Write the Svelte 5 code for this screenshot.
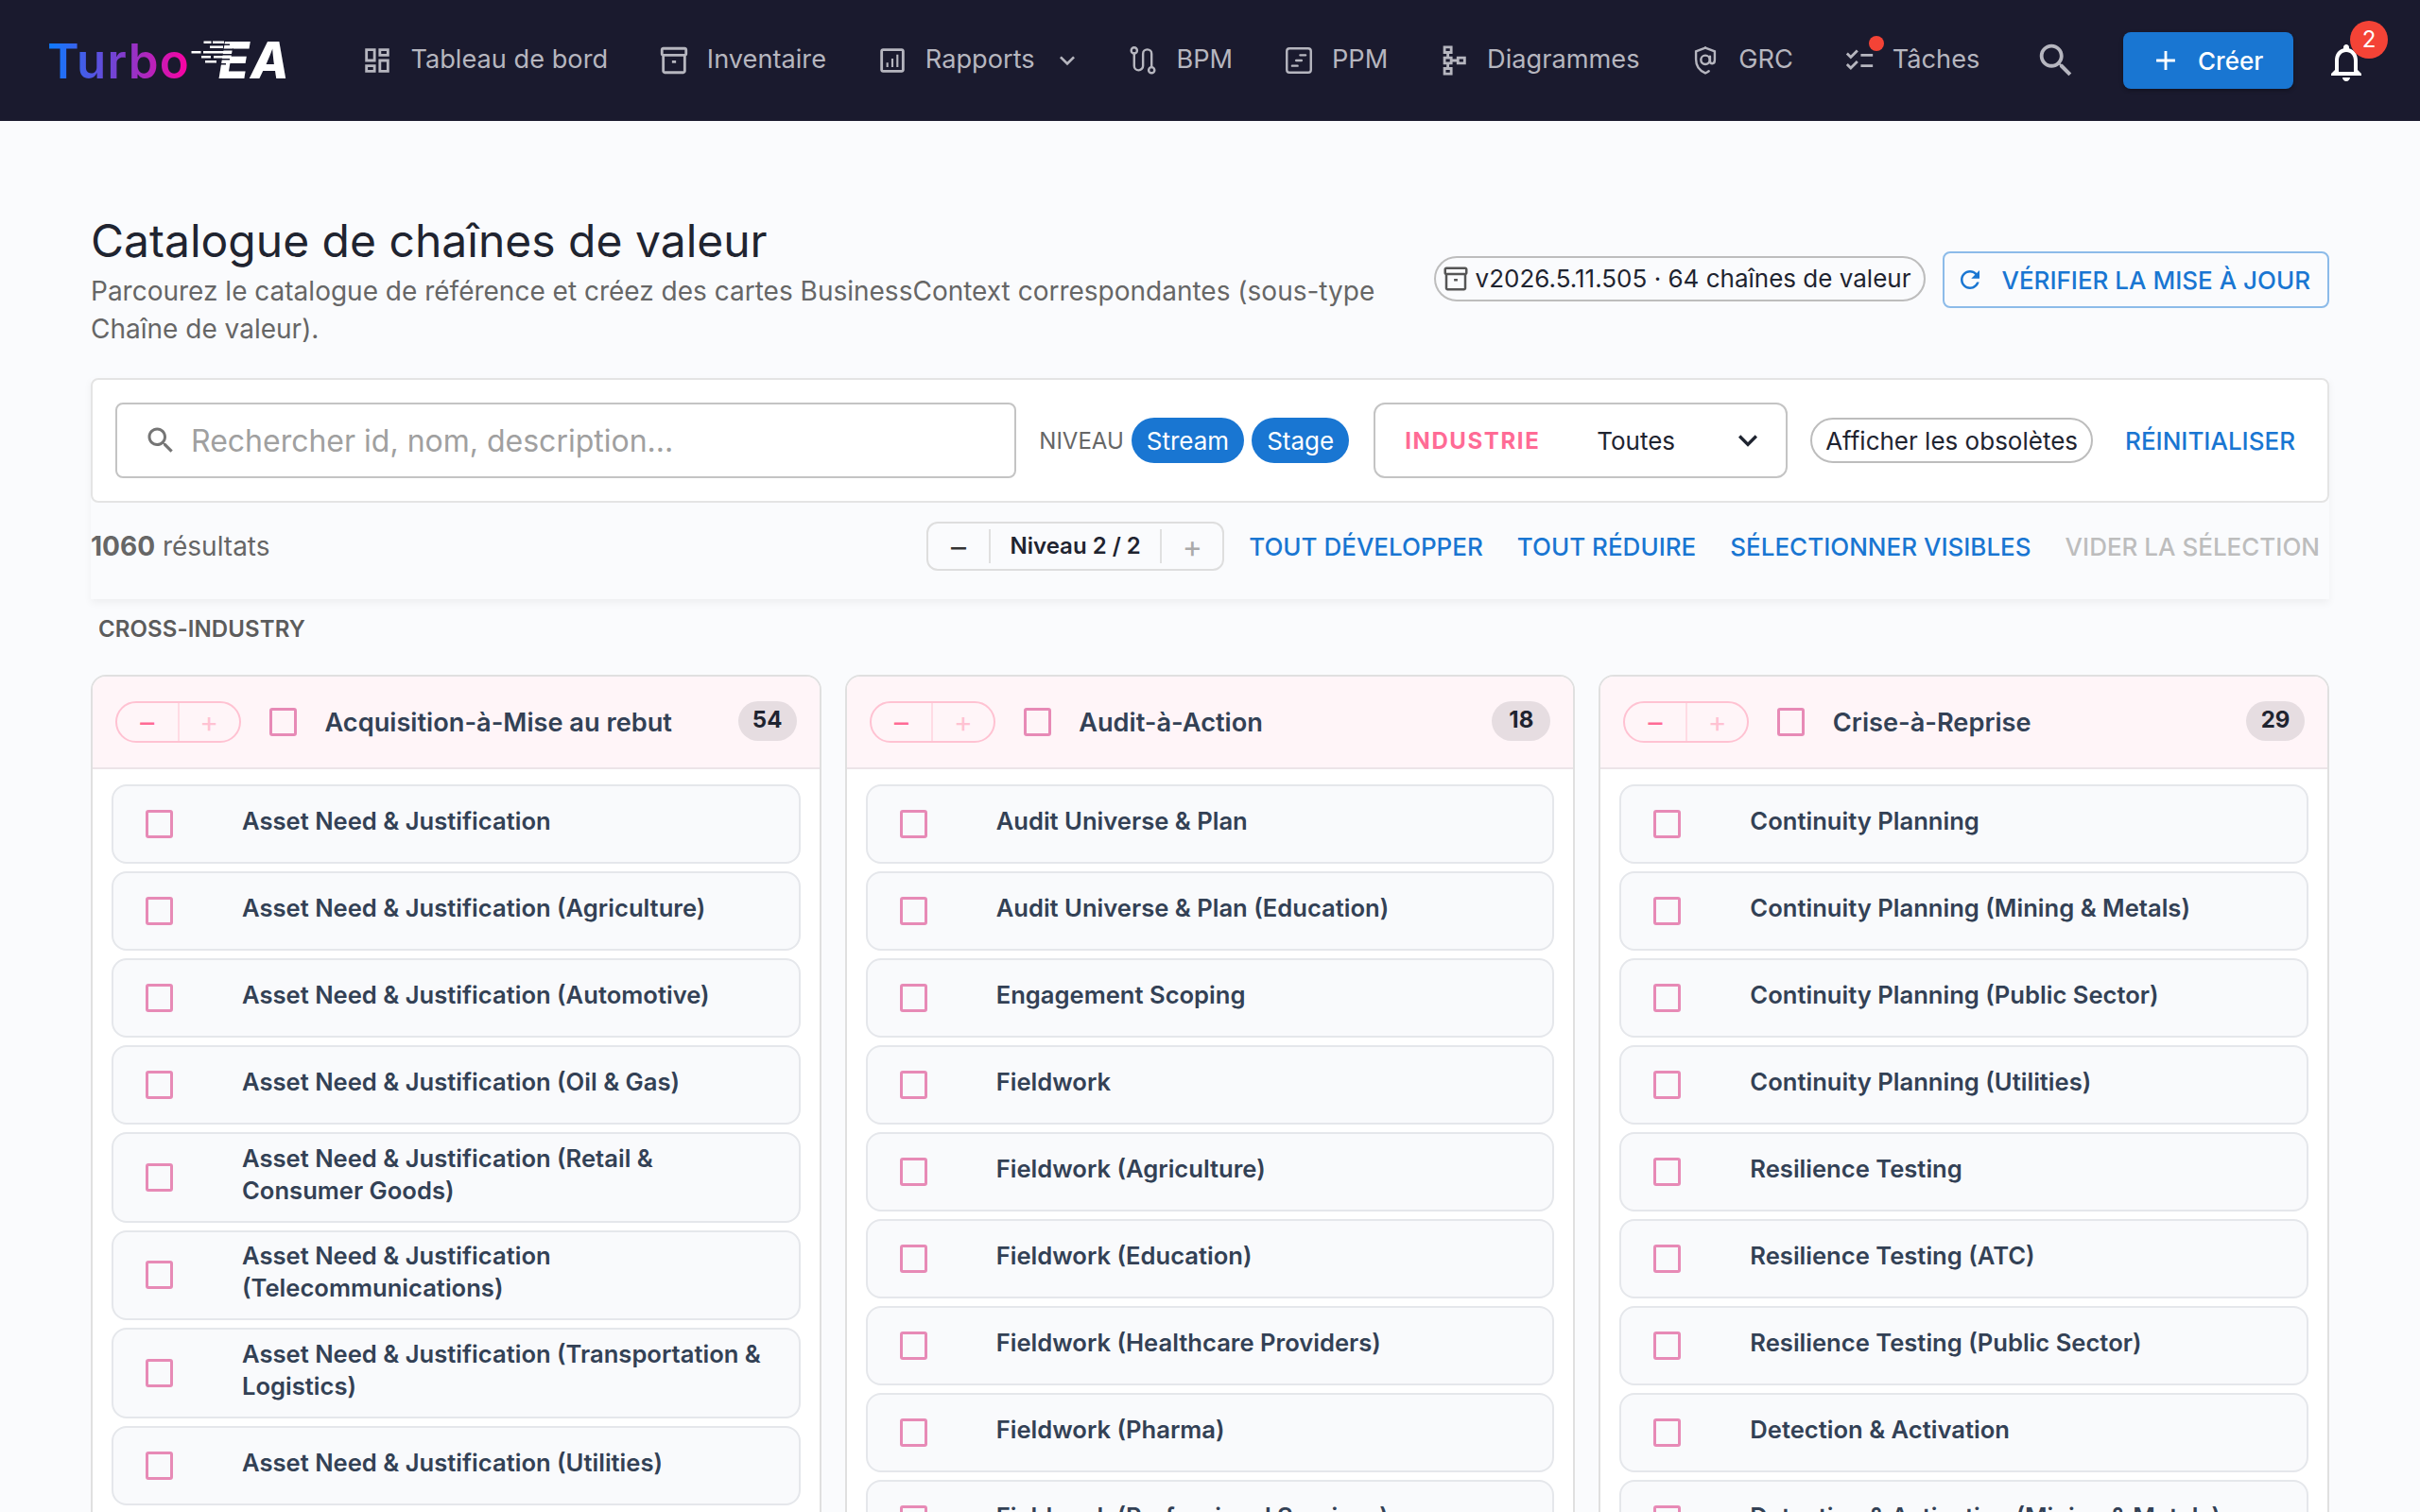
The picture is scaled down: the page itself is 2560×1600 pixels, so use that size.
<script>
	const icons = {
		dashboard: 'M19 5v2h-4V5h4M9 5v6H5V5h4m10 8v6h-4v-6h4M9 17v2H5v-2h4M21 3h-8v6h8V3zM11 3H3v10h8V3zm10 8h-8v10h8V11zm-10 4H3v6h8v-6z',
		archive: 'M20 2H4c-1 0-2 .9-2 2v3.01c0 .72.43 1.34 1 1.69V20c0 1.1 1.1 2 2 2h14c.9 0 2-.9 2-2V8.7c.57-.35 1-.97 1-1.69V4c0-1.1-1-2-2-2zm-1 18H5V9h14v11zm1-13H4V4h16v3zM10.5 12h3v2h-3z',
		report: 'M19 3H5c-1.1 0-2 .9-2 2v14c0 1.1.9 2 2 2h14c1.100 0 2-.9 2-2V5c0-1.100-.9-2-2-2zm0 16H5V5h14v14zM7.500 13.500h1.500V17H7.500zm3.750-3h1.500V17h-1.500zm3.750-3h1.500V17H15z',
		schema: 'M14 9v2h-3V9H8.500V7H11V1H4v6h2.500v2H4v6h2.500v2H4v6h7v-6H8.500v-2H11v-2h3v2h7V9h-7zM9 3v2H6V3h3zM9 19v2H6v-2h3zM9 11v2H6v-2h3zM19 11v2h-3v-2h3z',
		checklist: 'M22 7h-9v2h9V7zm0 8h-9v2h9v-2zM5.540 11 2 7.460l1.410-1.410 2.120 2.120 4.240-4.240 1.410 1.410L5.540 11zm0 8L2 15.460l1.410-1.410 2.120 2.120 4.240-4.240 1.410 1.410L5.540 19z',
		search: 'M15.500 14h-.79l-.28-.27C15.410 12.590 16 11.110 16 9.500 16 5.910 13.090 3 9.500 3S3 5.910 3 9.500 5.910 16 9.500 16c1.610 0 3.090-.59 4.230-1.570l.27.28v.79l5 4.990L20.490 19l-4.990-5zm-6 0C7.010 14 5 11.990 5 9.500S7.010 5 9.500 5 14 7.010 14 9.500 11.990 14 9.500 14z',
		bell: 'M12 22c1.100 0 2-.9 2-2h-4c0 1.100.9 2 2 2zm6-6v-5c0-3.070-1.630-5.640-4.500-6.320V4c0-.83-.67-1.500-1.500-1.500s-1.500.67-1.500 1.500v.68C7.640 5.360 6 7.920 6 11v5l-2 2v1h16v-1l-2-2zm-2 1H8v-6c0-2.480 1.510-4.500 4-4.500s4 2.020 4 4.500v6z',
		refresh: 'M17.650 6.350C16.200 4.900 14.210 4 12 4c-4.420 0-7.990 3.580-7.990 8s3.570 8 7.990 8c3.730 0 6.840-2.550 7.730-6h-2.080c-.82 2.330-3.040 4-5.650 4-3.310 0-6-2.690-6-6s2.690-6 6-6c1.660 0 3.140.69 4.220 1.780L13 11h7V4l-2.350 2.350z',
		chevron: 'M7.410 8.590 12 13.170l4.590-4.580L18 10l-6 6-6-6 1.410-1.410z',
		plus: 'M19 13h-6v6h-2v-6H5v-2h6V5h2v6h6v2z',
	};

	const columns = [
		{
			title: 'Acquisition-à-Mise au rebut',
			count: 54,
			items: [
				'Asset Need & Justification',
				'Asset Need & Justification (Agriculture)',
				'Asset Need & Justification (Automotive)',
				'Asset Need & Justification (Oil & Gas)',
				'Asset Need & Justification (Retail & Consumer Goods)',
				'Asset Need & Justification (Telecommunications)',
				'Asset Need & Justification (Transportation & Logistics)',
				'Asset Need & Justification (Utilities)',
			],
		},
		{
			title: 'Audit-à-Action',
			count: 18,
			items: [
				'Audit Universe & Plan',
				'Audit Universe & Plan (Education)',
				'Engagement Scoping',
				'Fieldwork',
				'Fieldwork (Agriculture)',
				'Fieldwork (Education)',
				'Fieldwork (Healthcare Providers)',
				'Fieldwork (Pharma)',
				'Fieldwork (Professional Services)',
			],
		},
		{
			title: 'Crise-à-Reprise',
			count: 29,
			items: [
				'Continuity Planning',
				'Continuity Planning (Mining & Metals)',
				'Continuity Planning (Public Sector)',
				'Continuity Planning (Utilities)',
				'Resilience Testing',
				'Resilience Testing (ATC)',
				'Resilience Testing (Public Sector)',
				'Detection & Activation',
				'Detection & Activation (Mining & Metals)',
			],
		},
	];
</script>

<div class="page">
	<header class="topbar">
		<div class="logo">
			<span class="turbo">Turbo</span>
			<span class="ea">EA</span>
			<svg class="speed" viewBox="0 0 115 48" aria-hidden="true">
				<g fill="#1a1a2e">
					<rect x="30" y="7.500" width="18" height="1.500" />
					<rect x="30" y="12.500" width="22" height="2" />
					<rect x="30" y="18" width="20" height="1.500" />
					<rect x="30" y="23" width="18" height="1.500" />
					<rect x="30" y="28" width="14" height="1.500" />
				</g>
				<g fill="#fff">
					<rect x="20.500" y="4.500" width="8" height="2.500" />
					<rect x="30" y="4.500" width="12" height="2.500" />
					<rect x="27" y="9.500" width="14" height="2.500" />
					<rect x="7.500" y="15" width="10" height="2.500" />
					<rect x="20" y="15" width="25" height="2.500" />
					<rect x="18" y="20" width="10" height="2.500" />
					<rect x="31" y="20" width="16" height="2.500" />
					<rect x="22" y="25" width="12" height="2.500" />
				</g>
			</svg>
		</div>

		<nav class="nav">
			<button class="nav-item">
				<svg class="nav-icon" viewBox="0 0 24 24"><path d={icons.dashboard} /></svg>
				Tableau de bord
			</button>
			<button class="nav-item">
				<svg class="nav-icon" viewBox="0 0 24 24"><path d={icons.archive} /></svg>
				Inventaire
			</button>
			<button class="nav-item">
				<svg class="nav-icon" viewBox="0 0 24 24"><path d={icons.report} /></svg>
				Rapports
				<svg class="nav-caret" viewBox="0 0 24 24"><path d={icons.chevron} /></svg>
			</button>
			<button class="nav-item">
				<svg class="nav-icon line" viewBox="0 0 24 24">
					<circle cx="5.500" cy="4.500" r="2.200" />
					<path d="M5.500 6.700V16a3.300 3.300 0 0 0 6.600 0V7a3.200 3.200 0 0 1 6.400 0v10" />
					<circle cx="18.500" cy="19.200" r="2.200" />
				</svg>
				BPM
			</button>
			<button class="nav-item">
				<svg class="nav-icon line" viewBox="0 0 24 24">
					<rect x="3" y="3" width="18" height="18" rx="2" />
					<path d="M13 8h4M10 12h4M7 16h4" />
				</svg>
				PPM
			</button>
			<button class="nav-item">
				<svg class="nav-icon" viewBox="0 0 24 24"><path d={icons.schema} /></svg>
				Diagrammes
			</button>
			<button class="nav-item">
				<svg class="nav-icon line" viewBox="0 0 24 24">
					<path d="M12 2.500 5 5.200v6c0 4.800 2.900 8.600 7 10.300 1-.4 1.800-.9 2.600-1.500" />
					<path d="M12 2.500l7 2.700v6.300c0 1.600-.6 2.800-1.800 2.800-1 0-1.700-.7-1.700-1.800V9" />
					<circle cx="12" cy="11.500" r="3.300" />
				</svg>
				GRC
			</button>
			<button class="nav-item">
				<span class="task-icon">
					<svg class="nav-icon" viewBox="0 0 24 24"><path d={icons.checklist} /></svg>
					<span class="dot"></span>
				</span>
				Tâches
			</button>
		</nav>

		<svg class="top-search" viewBox="0 0 24 24"><path d={icons.search} /></svg>
		<button class="create">
			<svg viewBox="0 0 24 24"><path d={icons.plus} /></svg>
			Créer
		</button>
		<div class="bell">
			<svg viewBox="0 0 24 24"><path d={icons.bell} /></svg>
			<span class="bell-badge">2</span>
		</div>
	</header>

	<main class="content">
		<div class="title-row">
			<div class="title-text">
				<h1>Catalogue de chaînes de valeur</h1>
				<p>Parcourez le catalogue de référence et créez des cartes BusinessContext correspondantes (sous-type Chaîne de valeur).</p>
			</div>
			<span class="version">
				<svg viewBox="0 0 24 24"><path d={icons.archive} /></svg>
				v2026.5.11.505 · 64 chaînes de valeur
			</span>
			<button class="check-update">
				<svg viewBox="0 0 24 24"><path d={icons.refresh} /></svg>
				VÉRIFIER LA MISE À JOUR
			</button>
		</div>

		<section class="sticky">
			<div class="filters">
				<label class="search">
					<svg viewBox="0 0 24 24"><path d={icons.search} /></svg>
					<input placeholder="Rechercher id, nom, description..." />
				</label>
				<div class="levels">
					<span class="levels-label">NIVEAU</span>
					<span class="chip on">Stream</span>
					<span class="chip on">Stage</span>
				</div>
				<div class="industry">
					<span class="industry-label">INDUSTRIE</span>
					<span class="industry-value">Toutes</span>
					<svg viewBox="0 0 24 24"><path d={icons.chevron} /></svg>
				</div>
				<span class="chip outline">Afficher les obsolètes</span>
				<button class="text-btn">RÉINITIALISER</button>
			</div>
			<div class="results">
				<span class="count"><b>1060</b> résultats</span>
				<div class="level-step">
					<span class="step">–</span>
					<span class="step-label">Niveau 2 / 2</span>
					<span class="step faded">+</span>
				</div>
				<button class="text-btn">TOUT DÉVELOPPER</button>
				<button class="text-btn">TOUT RÉDUIRE</button>
				<button class="text-btn">SÉLECTIONNER VISIBLES</button>
				<button class="text-btn disabled">VIDER LA SÉLECTION</button>
			</div>
		</section>

		<h2 class="group">CROSS-INDUSTRY</h2>

		<div class="columns">
			{#each columns as col}
				<article class="column">
					<div class="col-head">
						<div class="col-step">
							<span>–</span>
							<span class="faded">+</span>
						</div>
						<span class="box"></span>
						<h3>{col.title}</h3>
						<span class="badge">{col.count}</span>
					</div>
					<div class="col-list">
						{#each col.items as item}
							<div class="item">
								<span class="box"></span>
								<span class="item-text">{item}</span>
							</div>
						{/each}
					</div>
				</article>
			{/each}
		</div>
	</main>
</div>

<style>
	:global(body) {
		margin: 0;
		background: #fafbfd;
	}
	.page {
		height: 1600px;
		overflow: hidden;
		font-family: Inter, "Liberation Sans", sans-serif;
	}
	button {
		font: inherit;
		background: none;
		border: 0;
		cursor: pointer;
	}

	/* top bar */
	.topbar {
		height: 128px;
		background: #1a1a2e;
		display: flex;
		align-items: center;
		padding: 0 54px 0 50px;
		box-sizing: border-box;
	}
	.logo {
		position: relative;
		width: 255px;
		margin-right: 51px;
		display: flex;
		align-items: center;
		justify-content: space-between;
		font-size: 51px;
		line-height: 1;
		flex: none;
	}
	.turbo {
		font-weight: 600;
		letter-spacing: 1.200px;
		background: linear-gradient(90deg, #0a7cff, #7b3fd0 50%, #ff00a0);
		-webkit-background-clip: text;
		background-clip: text;
		color: transparent;
	}
	.ea {
		color: #fff;
		font-size: 53px;
		font-weight: 800;
		font-style: italic;
		letter-spacing: 1.300px;
		margin-right: -2px;
	}
	.speed {
		position: absolute;
		left: 145px;
		top: 1px;
		width: 115px;
		height: 48px;
	}
	.nav {
		display: flex;
		align-items: center;
		padding-bottom: 4px;
	}
	.nav-item {
		display: flex;
		align-items: center;
		gap: 18px;
		padding: 0 26.400px;
		font-size: 27.200px;
		color: #b6b6bf;
		white-space: nowrap;
	}
	.nav-icon {
		width: 34px;
		height: 34px;
		fill: #b6b6bf;
		flex: none;
		margin-top: 4px;
	}
	.nav-icon.line {
		fill: none;
		stroke: #b6b6bf;
		stroke-width: 1.700;
		stroke-linecap: round;
	}
	.nav-caret {
		width: 32px;
		height: 32px;
		fill: #b6b6bf;
		margin-top: 4px;
		margin-right: -5px;
	}
	.task-icon {
		position: relative;
		display: flex;
	}
	.dot {
		position: absolute;
		right: -9px;
		top: -5px;
		width: 16px;
		height: 16px;
		border-radius: 50%;
		background: #f44336;
	}
	.top-search {
		width: 46px;
		height: 46px;
		fill: #b6b6bf;
		margin-left: auto;
		flex: none;
	}
	.create {
		display: flex;
		align-items: center;
		gap: 17px;
		height: 60px;
		width: 180px;
		box-sizing: border-box;
		margin-left: 48px;
		padding: 0 0 0 28px;
		border-radius: 8px;
		background: #1976d2;
		color: #fff;
		font-size: 26px;
		font-weight: 500;
		box-shadow: 0 2px 4px rgba(0, 0, 0, 0.3);
		flex: none;
	}
	.create svg {
		width: 34px;
		height: 34px;
		fill: #fff;
	}
	.bell {
		position: relative;
		margin-left: 32px;
		width: 48px;
		height: 48px;
		margin-top: 4px;
		flex: none;
	}
	.bell svg {
		width: 48px;
		height: 48px;
		fill: #fff;
	}
	.bell-badge {
		position: absolute;
		left: 28px;
		top: -20px;
		width: 40px;
		height: 40px;
		border-radius: 50%;
		background: #f44336;
		color: #fff;
		font-size: 24px;
		line-height: 40px;
		text-align: center;
	}

	/* page */
	.content {
		padding: 96px 96px 0;
	}
	.title-row {
		display: flex;
		align-items: center;
		gap: 18px;
	}
	.title-text {
		flex: 1;
		margin-right: 20px;
	}
	h1 {
		margin: -1px 0 1px;
		font-size: 48px;
		font-weight: 400;
		line-height: 64px;
		color: #1f2430;
	}
	.title-text p {
		margin: 0;
		font-size: 28px;
		line-height: 40px;
		color: #666;
	}
	.version {
		display: flex;
		align-items: center;
		gap: 6px;
		height: 48px;
		box-sizing: border-box;
		padding: 0 14px 0 6px;
		border: 2px solid #bdbdbd;
		border-radius: 24px;
		font-size: 26px;
		color: #1f2430;
		white-space: nowrap;
		margin-top: -3px;
	}
	.version svg {
		width: 30px;
		height: 30px;
		fill: #555;
	}
	.check-update {
		display: flex;
		align-items: center;
		gap: 18px;
		height: 60px;
		box-sizing: border-box;
		padding: 0 18px 0 12px;
		border: 2px solid #8cbbe9;
		border-radius: 8px;
		color: #1976d2;
		font-size: 26px;
		font-weight: 500;
		white-space: nowrap;
	}
	.check-update svg {
		width: 30px;
		height: 30px;
		fill: #1976d2;
	}

	/* filters */
	.sticky {
		margin-top: 32px;
		box-shadow: 0 4px 8px rgba(0, 0, 0, 0.05);
	}
	.filters {
		display: flex;
		align-items: center;
		gap: 24px;
		height: 132px;
		box-sizing: border-box;
		padding: 0 24px;
		background: #fff;
		border: 2px solid #e4e4e4;
		border-radius: 8px;
	}
	.search {
		flex: 1;
		display: flex;
		align-items: center;
		gap: 14px;
		height: 80px;
		box-sizing: border-box;
		padding-left: 28px;
		border: 2px solid #c4c4c4;
		border-radius: 8px;
	}
	.search svg {
		width: 36px;
		height: 36px;
		fill: #757575;
		flex: none;
	}
	.search input {
		flex: 1;
		min-width: 0;
		border: 0;
		outline: 0;
		padding: 0;
		font: inherit;
		font-size: 32px;
		background: none;
	}
	.search input::placeholder {
		color: #a0a0a0;
		opacity: 1;
	}
	.levels {
		display: flex;
		align-items: center;
		gap: 8px;
		margin-right: 2px;
	}
	.levels-label {
		font-size: 24px;
		color: #666;
	}
	.chip {
		display: flex;
		align-items: center;
		height: 48px;
		box-sizing: border-box;
		padding: 0 16px;
		border-radius: 24px;
		font-size: 26px;
		white-space: nowrap;
	}
	.chip.on {
		background: #1976d2;
		color: #fff;
	}
	.chip.outline {
		padding: 0 14px;
		border: 2px solid #bdbdbd;
		color: #1f2430;
	}
	.industry {
		display: flex;
		align-items: center;
		width: 438px;
		height: 80px;
		box-sizing: border-box;
		padding-left: 31px;
		border: 2px solid #c4c4c4;
		border-radius: 12px;
	}
	.industry-label {
		font-size: 24px;
		font-weight: 700;
		letter-spacing: 1.600px;
		color: #ff6b95;
		width: 203px;
	}
	.industry-value {
		font-size: 26px;
		color: #1f2430;
		flex: 1;
	}
	.industry svg {
		width: 40px;
		height: 40px;
		fill: #1f2430;
		margin-right: 20px;
	}
	.text-btn {
		padding: 10px;
		font-size: 26px;
		font-weight: 500;
		color: #1976d2;
		white-space: nowrap;
	}
	.text-btn.disabled {
		color: #bdbdbd;
	}
	.results {
		display: flex;
		align-items: center;
		justify-content: flex-end;
		gap: 16px;
		height: 102px;
		box-sizing: border-box;
		padding-bottom: 10px;
	}
	.count {
		margin-right: auto;
		font-size: 28px;
		color: #666;
	}
	.level-step {
		display: flex;
		align-items: center;
		height: 52px;
		box-sizing: border-box;
		border: 2px solid #dedede;
		border-radius: 12px;
		font-size: 24px;
	}
	.step {
		width: 64px;
		text-align: center;
		font-size: 32px;
		color: #333;
	}
	.step.faded {
		color: #aaa;
	}
	.step-label {
		padding: 0 20.500px;
		height: 36px;
		line-height: 36px;
		font-weight: 600;
		color: #1f2430;
		border-left: 2px solid #e0e0e0;
		border-right: 2px solid #e0e0e0;
	}

	.group {
		margin: 12px 0 28px;
		padding-left: 8px;
		font-size: 24px;
		line-height: 40px;
		font-weight: 600;
		letter-spacing: 0.100px;
		color: #5c5c5c;
	}

	/* catalogue */
	.columns {
		display: grid;
		grid-template-columns: repeat(3, 1fr);
		gap: 25px;
	}
	.column {
		min-width: 0;
		background: #fff;
		border: 2px solid #e0e0e0;
		border-radius: 16px;
		overflow: hidden;
	}
	.col-head {
		display: flex;
		align-items: center;
		height: 98px;
		box-sizing: border-box;
		padding: 0 24px;
		background: #fff5f8;
		border-bottom: 2px solid #ece4e8;
	}
	.col-step {
		display: flex;
		align-items: center;
		width: 133px;
		height: 44px;
		box-sizing: border-box;
		border: 2px solid #ffc2d2;
		border-radius: 22px;
		font-size: 30px;
		line-height: 40px;
		color: #ff6b95;
		text-align: center;
		margin-right: 30px;
		flex: none;
	}
	.col-step span {
		flex: 1;
	}
	.col-step .faded {
		color: #ffc2d2;
		border-left: 2px solid #ffdbe4;
	}
	.box {
		width: 29px;
		height: 30px;
		box-sizing: border-box;
		border: 3.500px solid #e78ab6;
		border-radius: 3px;
		flex: none;
	}
	h3 {
		flex: 1;
		margin: 0 0 0 29.500px;
		font-size: 27.200px;
		font-weight: 600;
		color: #334155;
		white-space: nowrap;
	}
	.badge {
		min-width: 62px;
		height: 42px;
		line-height: 40px;
		box-sizing: border-box;
		padding: 0 12px;
		border-radius: 21px;
		background: #e6dde1;
		color: #1f2430;
		font-size: 24px;
		font-weight: 700;
		text-align: center;
		margin-top: -2px;
	}
	.col-list {
		display: flex;
		flex-direction: column;
		gap: 8px;
		padding: 16px 20px;
	}
	.item {
		display: flex;
		align-items: center;
		min-height: 84px;
		box-sizing: border-box;
		padding: 8.800px 20px 8.800px 34px;
		background: #f9fafc;
		border: 2px solid #e5e7eb;
		border-radius: 16px;
	}
	.item-text {
		margin-left: 73px;
		padding-bottom: 6px;
		font-size: 25.600px;
		line-height: 34px;
		font-weight: 600;
		color: #334155;
	}
</style>
